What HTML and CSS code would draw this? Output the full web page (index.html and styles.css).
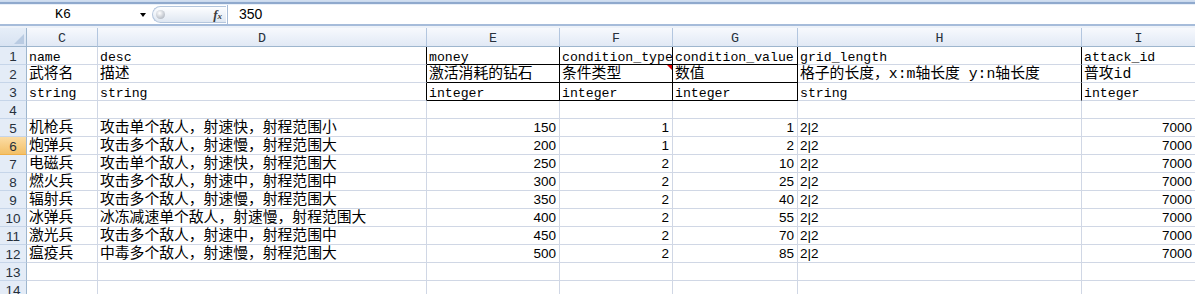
FILE: index.html
```html
<!DOCTYPE html>
<html lang="zh-CN">
<head>
    <meta charset="UTF-8">
    <meta name="viewport" content="width=device-width, initial-scale=1.0">
    <title>Sheet1</title>
    <link rel="stylesheet" href="styles.css">
</head>
<body>
    <div class="app">
        <div class="ribbon-edge"></div>
        <div class="formula-bar">
            <div class="name-box"><span class="name-ref">K6</span><span class="name-arrow"></span></div>
            <div class="fx-group"><span class="fx-knob"></span><span class="fx">f<small>x</small></span></div>
            <div class="formula-input">350</div>
        </div>
        <div class="bar-edge"></div>

        <div class="sheet">
            <div class="corner"><span class="corner-tri"></span></div>
            <div class="ch">C</div>
            <div class="ch">D</div>
            <div class="ch">E</div>
            <div class="ch">F</div>
            <div class="ch">G</div>
            <div class="ch">H</div>
            <div class="ch">I</div>

            <div class="rh">1</div>
            <div class="cell">name</div>
            <div class="cell line-r">desc</div>
            <div class="cell line-r line-b">money</div>
            <div class="cell line-r line-b">condition_type</div>
            <div class="cell line-r line-b">condition_value</div>
            <div class="cell line-r">grid_length</div>
            <div class="cell">attack_id</div>

            <div class="rh">2</div>
            <div class="cell zh">武将名</div>
            <div class="cell zh line-r">描述</div>
            <div class="cell zh line-r line-b">激活消耗的钻石</div>
            <div class="cell zh line-r line-b note">条件类型</div>
            <div class="cell zh line-r line-b">数值</div>
            <div class="cell zh line-r">格子的长度，x:m轴长度 y:n轴长度</div>
            <div class="cell zh">普攻id</div>

            <div class="rh">3</div>
            <div class="cell">string</div>
            <div class="cell line-r">string</div>
            <div class="cell line-r line-b">integer</div>
            <div class="cell line-r line-b">integer</div>
            <div class="cell line-r line-b">integer</div>
            <div class="cell line-r">string</div>
            <div class="cell">integer</div>

            <div class="rh">4</div>
            <div class="cell"></div>
            <div class="cell"></div>
            <div class="cell"></div>
            <div class="cell"></div>
            <div class="cell"></div>
            <div class="cell"></div>
            <div class="cell"></div>

            <div class="rh">5</div>
            <div class="cell zh">机枪兵</div>
            <div class="cell zh">攻击单个敌人，射速快，射程范围小</div>
            <div class="cell num">150</div>
            <div class="cell num">1</div>
            <div class="cell num">1</div>
            <div class="cell grid">2|2</div>
            <div class="cell num">7000</div>

            <div class="rh active">6</div>
            <div class="cell zh">炮弹兵</div>
            <div class="cell zh">攻击多个敌人，射速慢，射程范围大</div>
            <div class="cell num">200</div>
            <div class="cell num">1</div>
            <div class="cell num">2</div>
            <div class="cell grid">2|2</div>
            <div class="cell num">7000</div>

            <div class="rh">7</div>
            <div class="cell zh">电磁兵</div>
            <div class="cell zh">攻击单个敌人，射速快，射程范围大</div>
            <div class="cell num">250</div>
            <div class="cell num">2</div>
            <div class="cell num">10</div>
            <div class="cell grid">2|2</div>
            <div class="cell num">7000</div>

            <div class="rh">8</div>
            <div class="cell zh">燃火兵</div>
            <div class="cell zh">攻击多个敌人，射速中，射程范围中</div>
            <div class="cell num">300</div>
            <div class="cell num">2</div>
            <div class="cell num">25</div>
            <div class="cell grid">2|2</div>
            <div class="cell num">7000</div>

            <div class="rh">9</div>
            <div class="cell zh">辐射兵</div>
            <div class="cell zh">攻击多个敌人，射速慢，射程范围大</div>
            <div class="cell num">350</div>
            <div class="cell num">2</div>
            <div class="cell num">40</div>
            <div class="cell grid">2|2</div>
            <div class="cell num">7000</div>

            <div class="rh">10</div>
            <div class="cell zh">冰弹兵</div>
            <div class="cell zh">冰冻减速单个敌人，射速慢，射程范围大</div>
            <div class="cell num">400</div>
            <div class="cell num">2</div>
            <div class="cell num">55</div>
            <div class="cell grid">2|2</div>
            <div class="cell num">7000</div>

            <div class="rh">11</div>
            <div class="cell zh">激光兵</div>
            <div class="cell zh">攻击多个敌人，射速中，射程范围中</div>
            <div class="cell num">450</div>
            <div class="cell num">2</div>
            <div class="cell num">70</div>
            <div class="cell grid">2|2</div>
            <div class="cell num">7000</div>

            <div class="rh">12</div>
            <div class="cell zh">瘟疫兵</div>
            <div class="cell zh">中毒多个敌人，射速慢，射程范围大</div>
            <div class="cell num">500</div>
            <div class="cell num">2</div>
            <div class="cell num">85</div>
            <div class="cell grid">2|2</div>
            <div class="cell num">7000</div>

            <div class="rh">13</div>
            <div class="cell"></div>
            <div class="cell"></div>
            <div class="cell"></div>
            <div class="cell"></div>
            <div class="cell"></div>
            <div class="cell"></div>
            <div class="cell"></div>

            <div class="rh">14</div>
            <div class="cell"></div>
            <div class="cell"></div>
            <div class="cell"></div>
            <div class="cell"></div>
            <div class="cell"></div>
            <div class="cell"></div>
            <div class="cell"></div>
        </div>
    </div>
</body>
</html>
```

FILE: styles.css
```css
body {
  margin: 0;
  background: #fff;
}

.app {
  width: 1195px;
  height: 294px;
  overflow: hidden;
}

/* top edge + formula bar */
.ribbon-edge {
  height: 5px;
  background: linear-gradient(#d3e0f1 0, #c6d6ec 50%, #8fa9cd 50%, #8fa9cd 80%, #e9f0f9 80%);
}

.formula-bar {
  height: 19px;
  display: flex;
  align-items: center;
  background: #fff;
}

.name-box {
  width: 150px;
  display: flex;
  align-items: center;
}

.name-ref {
  width: 126px;
  text-align: center;
  font: 13.33px "Liberation Mono", monospace;
  color: #000;
}

.name-arrow {
  margin-left: 14px;
  width: 0;
  height: 0;
  border-left: 3.5px solid transparent;
  border-right: 3.5px solid transparent;
  border-top: 4px solid #000;
}

.fx-group {
  width: 74px;
  height: 17px;
  margin-left: 2px;
  box-sizing: border-box;
  display: flex;
  align-items: center;
  justify-content: space-between;
  padding: 0 4px 0 3px;
  border: 1px solid #b4c6dd;
  border-right: none;
  border-radius: 9px 0 0 9px;
  background: linear-gradient(#fdfeff, #dfe7f2);
}

.fx-knob {
  width: 9px;
  height: 9px;
  border-radius: 50%;
  background: radial-gradient(circle at 40% 35%, #ffffff 0, #d2d6dc 45%, #9ea6b1 100%);
}

.fx {
  font: italic bold 13px "Liberation Serif", serif;
  color: #3b3b3b;
}

.fx small {
  font-size: 9px;
}

.formula-input {
  flex: 1;
  height: 19px;
  margin-left: 1px;
  border-left: 1px solid #a9bdd8;
  padding-left: 11px;
  font: 14px "Liberation Sans", sans-serif;
  line-height: 19px;
  color: #000;
}

.bar-edge {
  height: 4px;
  background: linear-gradient(#a6bcda 0, #a6bcda 50%, #edf2f9 50%);
}

/* worksheet */
.sheet {
  display: grid;
  grid-template-columns: 27px 71px 329px 133px 113px 125px 284px 114px;
  grid-template-rows: 19px;
  grid-auto-rows: 18px;
}

.corner {
  position: relative;
  background: linear-gradient(#e6eef8, #d8e3f2);
  border-right: 1px solid #9eb6ce;
  border-bottom: 1px solid #9eb6ce;
}

.corner-tri {
  position: absolute;
  right: 2px;
  bottom: 2px;
  width: 0;
  height: 0;
  border-left: 10px solid transparent;
  border-bottom: 10px solid #b9cbe2;
}

.ch {
  display: flex;
  align-items: center;
  justify-content: center;
  padding-top: 3px;
  background: linear-gradient(#f7f9fd, #e1e9f5);
  border-right: 1px solid #b3c6df;
  border-bottom: 1px solid #9eb6ce;
  font: 13.33px "Liberation Mono", monospace;
  line-height: 1;
  color: #27313d;
}

.rh {
  display: flex;
  align-items: flex-end;
  justify-content: center;
  padding-bottom: 1.5px;
  background: #e4ecf7;
  border-right: 1px solid #9eb6ce;
  border-bottom: 1px solid #c6d5e9;
  font: 13.5px "Liberation Sans", sans-serif;
  line-height: 0.8;
  color: #27313d;
}

.rh.active {
  background: linear-gradient(#fbdca4, #f3c068);
  border-bottom-color: #f0b04a;
}

.cell {
  position: relative;
  display: flex;
  align-items: flex-end;
  padding: 0 2px 0.5px;
  white-space: nowrap;
  overflow: hidden;
  border-right: 1px solid #d0d7e5;
  border-bottom: 1px solid #d0d7e5;
  font: 13.2px "Liberation Mono", "Noto Sans CJK SC", monospace;
  line-height: 0.8;
  color: #000;
}

.cell.zh {
  padding-bottom: 1.5px;
  font-size: 14.8px;
}

.cell.num {
  justify-content: flex-end;
  padding: 0 3px 2px;
  font: 13.5px "Liberation Sans", sans-serif;
  line-height: 0.8;
}

.cell.grid {
  padding-bottom: 2px;
  font: 13.5px "Liberation Sans", sans-serif;
  line-height: 0.8;
}

.line-r {
  border-right-color: #000;
}

.line-b {
  border-bottom-color: #000;
}

/* comment marker */
.note::after {
  content: "";
  position: absolute;
  top: 0;
  right: 0;
  border-top: 5px solid #e00000;
  border-left: 5px solid transparent;
}
```
